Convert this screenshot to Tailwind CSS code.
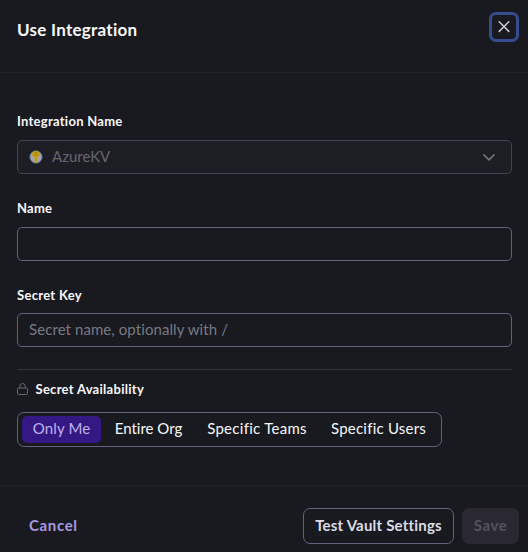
<!DOCTYPE html>
<html lang="en">
<head>
    <meta charset="UTF-8">
    <meta name="viewport" content="width=device-width, initial-scale=1.0">
    <title>Use Integration</title>
    <script src="https://cdn.jsdelivr.net/npm/@tailwindcss/browser@4"></script>
</head>
<body class="bg-[#191a1f] text-[#f8f8fc] font-['Lato',sans-serif] [font-variant-ligatures:none]">
    <div class="flex h-[552px] w-[528px] flex-col overflow-hidden">
        <!-- Header -->
        <header class="flex h-[73px] items-start justify-between border-b border-[#22222a] pt-3 pr-[9px] pl-[17px]">
            <h1 class="pt-1.5 text-[17px] leading-6 font-bold whitespace-nowrap tracking-[0.27px]">Use Integration</h1>
            <button type="button" aria-label="Close" class="flex size-[30px] items-center justify-center rounded-[7px] border-3 border-[#354d8f] text-[#c8c8d0]">
                <svg class="size-3" viewBox="0 0 12 12" fill="none" stroke="currentColor" stroke-width="1.5" stroke-linecap="round">
                    <path d="M1.2 .8l9.6 9.6M10.8 .8l-9.6 9.6" />
                </svg>
            </button>
        </header>

        <!-- Form -->
        <form id="integrationForm" class="flex h-[412px] flex-col pt-[39px] pr-4 pl-[17px]">
            <!-- Integration Name -->
            <div class="mb-[25px]">
                <label class="block h-7 text-[13px] leading-[18px] font-bold tracking-[0.27px]">Integration Name</label>
                <div class="flex h-[34px] items-center rounded-[5px] border border-[#454355] bg-[#1d1e23] pr-[11px] pl-[11px]">
                    <svg class="mr-[9px] size-[14px]" viewBox="0 0 14 14">
                        <circle cx="7" cy="7" r="6.3" fill="#a3a6ae" stroke="#2f4c88" stroke-width=".9" />
                        <path d="M7 .8c2.200 0 3.900 1.300 3.900 3.100S9.800 6.900 8.300 7.200v4.900L7 13.300l-1.300-1.200V7.200C4.200 6.900 3.100 5.700 3.100 3.900S4.800.8 7 .8z" fill="#c49c0c" />
                        <circle cx="7" cy="2.500" r=".7" fill="#7b6a2c" />
                        <path d="M5 4.800h4" stroke="#8d7418" stroke-width=".6" />
                    </svg>
                    <span class="grow pb-px text-[15px] text-[#66666f]">AzureKV</span>
                    <svg class="mr-[5px] h-[7px] w-3" viewBox="0 0 12 7" fill="none" stroke="#74747e" stroke-width="1.5" stroke-linecap="round" stroke-linejoin="round">
                        <path d="M1 .9l5 5 5-5" />
                    </svg>
                </div>
            </div>

            <!-- Name -->
            <div class="mb-[25px]">
                <label for="name" class="block h-7 text-[13px] leading-[18px] font-bold tracking-[0.25px]">Name</label>
                <input type="text" name="name" id="name" class="block h-[34px] w-full rounded-[5px] border border-[#646180] px-[11px]">
            </div>

            <!-- Secret Key -->
            <div class="mb-[22px]">
                <label for="secret_key" class="block h-[27px] text-[13px] leading-[18px] font-bold tracking-[0.3px]">Secret Key</label>
                <input type="text" name="secret_key" id="secret_key" placeholder="Secret name, optionally with /" class="block h-[34px] w-full rounded-[5px] border border-[#646180] px-[11px] pb-0.5 text-[15px] tracking-[0.08px] placeholder:text-[#777985]">
            </div>

            <!-- Secret Availability -->
            <div class="border-t border-[#37363f] pt-2.5">
                <div class="mb-3.5 flex items-center gap-[7px]">
                    <svg class="h-3 w-[11px]" viewBox="0 0 11 12" fill="none" stroke="#666973" stroke-linejoin="round">
                        <rect x=".5" y="5" width="10" height="6.5" rx="1.3" />
                        <path d="M2.8 5V3.2a2.7 2.7 0 0 1 5.4 0V5" />
                    </svg>
                    <span class="pl-[0.5px] text-[13px] leading-[18px] font-bold tracking-[0.28px]">Secret Availability</span>
                </div>
                <div class="flex h-[35px] w-[425px] items-center rounded-[7px] border border-[#646180] pl-1 text-[15px] whitespace-nowrap">
                    <button type="button" class="h-[27px] w-[79px] rounded-[5px] bg-[#341884] pb-0.5 tracking-[0.15px] text-[#c0b2ec]">Only Me</button>
                    <button type="button" class="h-[27px] w-[95px] pb-0.5">Entire Org</button>
                    <button type="button" class="h-[27px] w-[122px] pb-0.5 tracking-[0.28px]">Specific Teams</button>
                    <button type="button" class="h-[27px] w-[121px] pb-0.5 tracking-[0.22px]">Specific Users</button>
                </div>
            </div>
        </form>

        <!-- Footer -->
        <footer class="flex h-[67px] items-start border-t border-[#22222a] pt-[22px] pr-[9px] pl-[17px] text-[15px] font-bold whitespace-nowrap">
            <button type="button" class="h-9 px-3 pb-px tracking-[0.65px] text-[#a898e0]">Cancel</button>
            <button type="button" class="ml-auto h-9 w-[151px] rounded-[7px] border border-[#646180] pb-px tracking-[0.2px] text-[#dcdce6]">Test Vault Settings</button>
            <button type="button" class="ml-2 h-9 w-[57px] rounded-[7px] bg-[#2a2932] pb-px tracking-[0.6px] text-[#54535f]" disabled>Save</button>
        </footer>
    </div>
</body>
</html>
